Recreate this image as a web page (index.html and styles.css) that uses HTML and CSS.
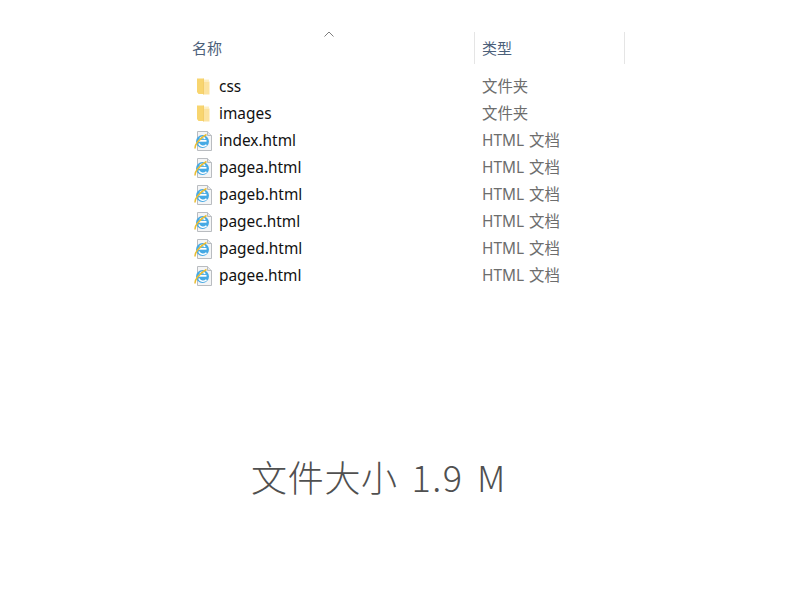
FILE: index.html
```html
<!DOCTYPE html>
<html lang="zh">

<head>
    <meta charset="UTF-8">
    <title>文件大小</title>
    <link rel="stylesheet" href="styles.css">
</head>

<body>
    <svg class="defs" width="0" height="0">
        <symbol id="folder" viewBox="0 0 20 20">
            <path d="M3 1.500h6.500v15.500H4.500L3 15z" fill="#f8d56f"/>
            <path d="M9.500 2.500H15v2H9.500z" fill="#fdf0c4"/>
            <path d="M9.500 4.500H15.500V17.500H9.500z" fill="#fce3a0"/>
            <path d="M9.500 1.500v16" stroke="#f0c75a" stroke-width=".8"/>
        </symbol>
        <symbol id="ie" viewBox="0 0 20 20">
            <path d="M3.500 .5h10l4 4v15h-14z" fill="#f4f5f6" stroke="#b9bcc0"/>
            <path d="M13.500 .5v4h4" fill="#e6e8ea" stroke="#b9bcc0"/>
            <circle cx="8.500" cy="10.500" r="6.500" fill="#45a9e4"/>
            <path d="M4.500 9.800h8" stroke="#fff" stroke-width="1.800"/>
            <path d="M5.800 7.500c1.700-1.400 4-1.200 5.400.3M4.800 12.500c1.200 3.200 5.600 3.600 7.700 1.200" fill="none" stroke="#fff" stroke-width="1.600"/>
            <path d="M1.300 17.500c-1.200-2.500 3.500-10 11.200-14" fill="none" stroke="#e9bc33" stroke-width="1.500"/>
        </symbol>
    </svg>

    <div class="explorer">
        <div class="sort-arrow">
            <svg width="10" height="6" viewBox="0 0 10 6"><path d="M.5 5.500 5 1l4.500 4.500" fill="none" stroke="#7d7d7d"/></svg>
        </div>
        <div class="header">
            <div class="col-name">名称</div>
            <div class="col-type">类型</div>
        </div>
        <ul class="files">
            <li><svg class="icon"><use href="#folder"/></svg><span class="name">css</span><span class="type">文件夹</span></li>
            <li><svg class="icon"><use href="#folder"/></svg><span class="name">images</span><span class="type">文件夹</span></li>
            <li><svg class="icon"><use href="#ie"/></svg><span class="name">index.html</span><span class="type">HTML 文档</span></li>
            <li><svg class="icon"><use href="#ie"/></svg><span class="name">pagea.html</span><span class="type">HTML 文档</span></li>
            <li><svg class="icon"><use href="#ie"/></svg><span class="name">pageb.html</span><span class="type">HTML 文档</span></li>
            <li><svg class="icon"><use href="#ie"/></svg><span class="name">pagec.html</span><span class="type">HTML 文档</span></li>
            <li><svg class="icon"><use href="#ie"/></svg><span class="name">paged.html</span><span class="type">HTML 文档</span></li>
            <li><svg class="icon"><use href="#ie"/></svg><span class="name">pagee.html</span><span class="type">HTML 文档</span></li>
        </ul>
    </div>

    <p class="size">文件大小 <span class="size-num">1.9 M</span></p>
</body>

</html>
```

FILE: styles.css
```css
body {
    margin: 0;
    background-color: #fff;
    font-family: "Noto Sans", "Noto Sans CJK SC", sans-serif;
}

.defs {
    display: block;
    height: 0;
}

.explorer {
    position: relative;
    width: 434px;
    margin-left: 191px;
    padding-top: 32px;
}

.sort-arrow {
    position: absolute;
    left: 133px;
    top: 31px;
    line-height: 0;
}

.header {
    display: flex;
    height: 32px;
    font-size: 15px;
    line-height: 32px;
    color: #4c607a;
    border-right: 1px solid #e5e5e5;
}

.col-name {
    width: 282px;
    padding-left: 1px;
}

.col-type {
    padding-left: 7px;
    border-left: 1px solid #e5e5e5;
}

.files {
    list-style: none;
    margin: 9px 0 0;
    padding: 0;
}

.files li {
    display: flex;
    align-items: center;
    height: 27px;
    font-size: 15.400px;
}

.icon {
    width: 20px;
    height: 20px;
    margin-left: 3px;
    flex-shrink: 0;
}

.name {
    width: 263px;
    margin-left: 5px;
    color: #111;
}

.type {
    margin-bottom: 2px;
    word-spacing: 1px;
    color: #6d6d6d;
}

.size {
    margin: 162px 0 0 251px;
    font-family: "Noto Sans CJK SC", sans-serif;
    font-size: 36px;
    line-height: 50px;
    color: #505050;
    font-weight: 300;
    letter-spacing: 0.7px;
    word-spacing: 5px;
}

.size-num {
    letter-spacing: 1.500px;
    word-spacing: 4px;
}
```
